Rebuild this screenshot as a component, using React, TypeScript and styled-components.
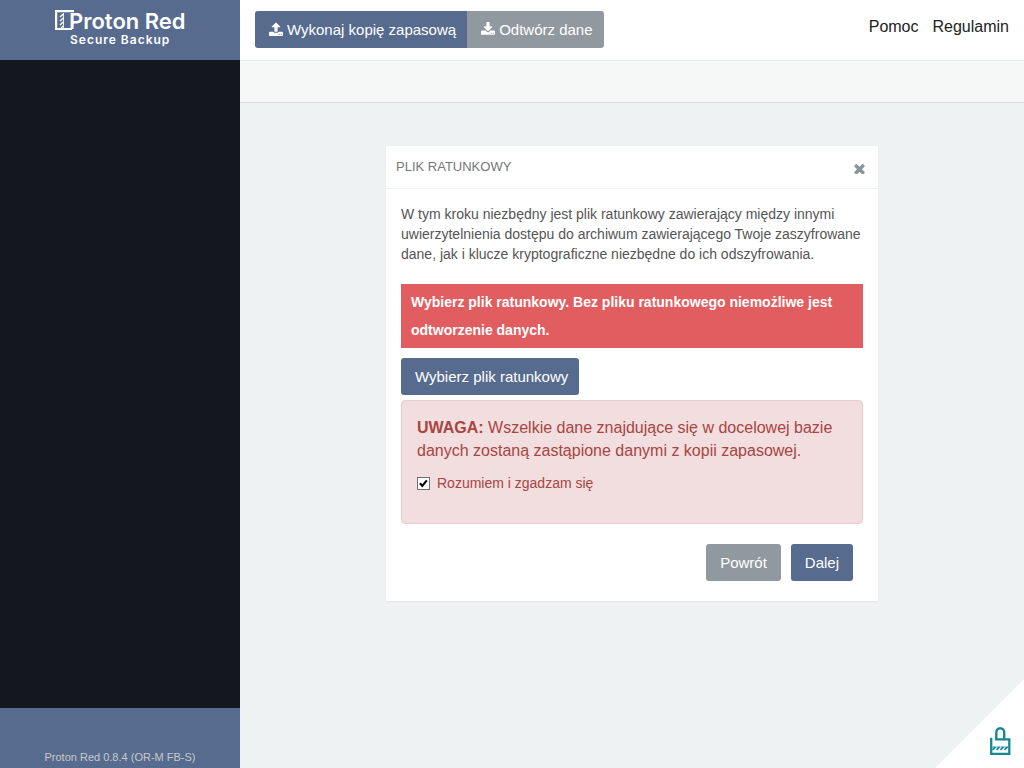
import React from "react";
import styled, { createGlobalStyle } from "styled-components";

const GlobalStyle = createGlobalStyle`
  *, *::before, *::after { box-sizing: border-box; }
  body {
    margin: 0;
    font-family: "Liberation Sans", Arial, sans-serif;
    font-size: 14px;
    line-height: 20px;
    color: #555555;
    background: #eef2f3;
  }
`;

const Layout = styled.div`
  display: grid;
  grid-template-columns: 240px 1fr;
  min-height: 100vh;
`;

const Sidebar = styled.aside`
  display: flex;
  flex-direction: column;
  background: #14171f;
`;

const Brand = styled.a`
  display: flex;
  justify-content: center;
  height: 60px;
  background: #576b8f;
`;

const SideBody = styled.div`
  flex: 1;
`;

const SideFooter = styled.footer`
  display: flex;
  align-items: flex-end;
  justify-content: center;
  height: 60px;
  background: #576b8f;
  color: #c8c8c8;
  font-size: 11px;
  line-height: 22px;
`;

const Main = styled.div`
  display: flex;
  flex-direction: column;
`;

const Header = styled.header`
  display: flex;
  justify-content: space-between;
  align-items: flex-start;
  height: 61px;
  padding: 11px 15px 0;
  background: #ffffff;
  border-bottom: 1px solid #e7e9ea;
`;

const SubBar = styled.div`
  height: 42px;
  background: #f6f8f8;
  border-bottom: 1px solid #d6dee4;
`;

const ButtonGroup = styled.div`
  display: flex;
  border-radius: 3px;
  overflow: hidden;
`;

const Button = styled.button<{ $tone?: "muted"; $square?: boolean; $snug?: boolean }>`
  display: inline-flex;
  align-items: center;
  gap: 4px;
  height: 37px;
  padding: ${(p) => (p.$snug ? "0 11px 0 14px" : "0 14px")};
  border: 0;
  border-radius: ${(p) => (p.$square ? "0" : "3px")};
  background: ${(p) => (p.$tone === "muted" ? "#9199a0" : "#576b8f")};
  color: #ffffff;
  font-family: inherit;
  font-size: 15px;
  line-height: 20px;
  white-space: nowrap;
  cursor: pointer;
`;

const TopNav = styled.nav`
  display: flex;
  gap: 14px;
  padding-top: 6px;
`;

const TopLink = styled.a`
  color: #222222;
  font-size: 16px;
  line-height: 20px;
  text-decoration: none;
`;

const Content = styled.main`
  flex: 1;
  display: flex;
  justify-content: center;
  align-items: flex-start;
  padding: 43px 15px;
`;

const Panel = styled.section`
  width: 100%;
  max-width: 492px;
  background: #ffffff;
  box-shadow: 0 1px 1px rgba(0, 0, 0, 0.05);
`;

const PanelHeader = styled.div`
  display: flex;
  justify-content: space-between;
  align-items: center;
  height: 43px;
  padding: 0 10px;
  border-bottom: 1px solid #eff2f7;
`;

const PanelTitle = styled.h1`
  margin: 0;
  color: #767676;
  font-size: 13px;
  font-weight: 400;
  line-height: 20px;
  text-transform: uppercase;
`;

const CloseButton = styled.button`
  display: flex;
  padding: 3px 3px 0;
  border: 0;
  background: none;
  color: #89949b;
  cursor: pointer;
`;

const PanelBody = styled.div`
  padding: 15px 15px 20px;
`;

const Intro = styled.p`
  margin: 0 0 20px;
`;

const ErrorNote = styled.p`
  margin: 0 0 10px;
  padding: 4px 10px;
  background: #e15d5f;
  color: #ffffff;
  font-weight: 700;
  line-height: 28px;
`;

const Warning = styled.div`
  margin-top: 5px;
  padding: 15px 15px 30px;
  border: 1px solid #ebccd1;
  border-radius: 4px;
  background: #f2dede;
  color: #a94442;
`;

const WarningText = styled.p`
  margin: 0 0 11px;
  font-size: 16px;
  line-height: 23px;
`;

const CheckLabel = styled.label`
  display: flex;
  align-items: center;
  gap: 7px;
  cursor: pointer;
`;

const Checkbox = styled.input`
  appearance: none;
  width: 13px;
  height: 13px;
  margin: 0;
  border: 1px solid #707070;
  background: #ffffff;

  &:checked {
    background: #ffffff
      url("data:image/svg+xml,%3Csvg xmlns='http://www.w3.org/2000/svg' viewBox='0 0 11 11'%3E%3Cpath d='M2 5.2 4.3 7.8 8.8 2.4' fill='none' stroke='%23000' stroke-width='2.1'/%3E%3C/svg%3E")
      center / 11px 11px no-repeat;
  }
`;

const Actions = styled.div`
  display: flex;
  justify-content: flex-end;
  gap: 10px;
  padding: 20px 10px 0 0;
`;

const Corner = styled.a`
  position: fixed;
  right: 0;
  bottom: 0;
  display: flex;
`;

const Logo = () => (
  <svg width="140" height="60" viewBox="0 0 140 60" role="img" aria-label="Proton Red Secure Backup">
    <g fill="none" stroke="#fff">
      <path d="M24 11.100H6.100V29H22" strokeWidth="2.200" />
      <path d="M10 17l3.600-3.200M10 21l3.600-3.200M10 25l3.600-3.200M11 28l2.600-2.200" strokeWidth="1.500" />
      <path d="M13.500 13V28" strokeWidth="0.800" />
    </g>
    <text x="19" y="29" fill="#fff" fontFamily="Inter, sans-serif" fontWeight="600" fontSize="22">Proton Red</text>
    <text x="20" y="44" fill="#fff" fontFamily="Inter, sans-serif" fontWeight="600" fontSize="12" letterSpacing="1">Secure Backup</text>
  </svg>
);

const UploadIcon = () => (
  <svg width="14" height="15" viewBox="0 0 1664 1792" fill="currentColor" aria-hidden="true">
    <path d="M1280 1472q0-26-19-45t-45-19-45 19-19 45 19 45 45 19 45-19 19-45zm256 0q0-26-19-45t-45-19-45 19-19 45 19 45 45 19 45-19 19-45zm128-224v320q0 40-28 68t-68 28h-1472q-40 0-68-28t-28-68v-320q0-40 28-68t68-28h427q21 56 70.5 92t110.5 36h256q61 0 110.5-36t70.5-92h427q40 0 68 28t28 68zm-325-648q-17 40-59 40h-256v448q0 26-19 45t-45 19h-256q-26 0-45-19t-19-45v-448h-256q-42 0-59-40-17-39 14-69l448-448q18-19 45-19t45 19l448 448q31 30 14 69z" />
  </svg>
);

const DownloadIcon = () => (
  <svg width="14" height="15" viewBox="0 0 1664 1792" fill="currentColor" aria-hidden="true">
    <path d="M1280 1344q0-26-19-45t-45-19-45 19-19 45 19 45 45 19 45-19 19-45zm256 0q0-26-19-45t-45-19-45 19-19 45 19 45 45 19 45-19 19-45zm128-224v320q0 40-28 68t-68 28h-1472q-40 0-68-28t-28-68v-320q0-40 28-68t68-28h465l135 136q58 56 136 56t136-56l136-136h464q40 0 68 28t28 68zm-325-569q17 41-14 70l-448 448q-18 19-45 19t-45-19l-448-448q-31-29-14-70 17-39 59-39h256v-448q0-26 19-45t45-19h256q26 0 45 19t19 45v448h256q42 0 59 39z" />
  </svg>
);

const CloseIcon = () => (
  <svg width="11" height="11" viewBox="270 250 1252 1252" fill="currentColor" aria-hidden="true">
    <path d="M1490 1322q0 40-28 68l-136 136q-28 28-68 28t-68-28l-294-294-294 294q-28 28-68 28t-68-28l-136-136q-28-28-28-68t28-68l294-294-294-294q-28-28-28-68t28-68l136-136q28-28 68-28t68 28l294 294 294-294q28-28 68-28t68 28l136 136q28 28 28 68t-28 68l-294 294 294 294q28 28 28 68z" />
  </svg>
);

const CornerLock = () => (
  <svg width="90" height="90" viewBox="0 0 90 90" aria-hidden="true">
    <path d="M90 1V90H1z" fill="#fff" />
    <g fill="none" stroke="#138a93">
      <path d="M57.200 59.700V75.800H75.300V61.300H61.200" strokeWidth="2.300" />
      <path d="M62.300 61.500V54.300a3.900 4 0 0 1 7.900 0V61.500" strokeWidth="2.400" />
      <path d="M58.500 71.800l3-3M62.500 71.800l3-3M66.500 71.800l3-3M70.500 71.800l3-3" strokeWidth="1.700" />
      <path d="M58 69h16" strokeWidth="0.700" />
    </g>
  </svg>
);

export default function App() {
  return (
    <>
      <GlobalStyle />
      <Layout>
        <Sidebar>
          <Brand href="#">
            <Logo />
          </Brand>
          <SideBody />
          <SideFooter>Proton Red 0.8.4 (OR-M FB-S)</SideFooter>
        </Sidebar>
        <Main>
          <Header>
            <ButtonGroup>
              <Button type="button" $square $snug>
                <UploadIcon />
                Wykonaj kopię zapasową
              </Button>
              <Button type="button" $square $snug $tone="muted">
                <DownloadIcon />
                Odtwórz dane
              </Button>
            </ButtonGroup>
            <TopNav>
              <TopLink href="#">Pomoc</TopLink>
              <TopLink href="#">Regulamin</TopLink>
            </TopNav>
          </Header>
          <SubBar />
          <Content>
            <Panel>
              <PanelHeader>
                <PanelTitle>Plik ratunkowy</PanelTitle>
                <CloseButton type="button" aria-label="Zamknij">
                  <CloseIcon />
                </CloseButton>
              </PanelHeader>
              <PanelBody>
                <Intro>
                  W tym kroku niezbędny jest plik ratunkowy zawierający między innymi uwierzytelnienia
                  dostępu do archiwum zawierającego Twoje zaszyfrowane dane, jak i klucze
                  kryptograficzne niezbędne do ich odszyfrowania.
                </Intro>
                <ErrorNote>
                  Wybierz plik ratunkowy. Bez pliku ratunkowego niemożliwe jest odtworzenie danych.
                </ErrorNote>
                <Button type="button" $snug>Wybierz plik ratunkowy</Button>
                <Warning>
                  <WarningText>
                    <strong>UWAGA:</strong> Wszelkie dane znajdujące się w docelowej bazie danych
                    zostaną zastąpione danymi z kopii zapasowej.
                  </WarningText>
                  <CheckLabel>
                    <Checkbox type="checkbox" defaultChecked />
                    Rozumiem i zgadzam się
                  </CheckLabel>
                </Warning>
                <Actions>
                  <Button type="button" $tone="muted">Powrót</Button>
                  <Button type="button">Dalej</Button>
                </Actions>
              </PanelBody>
            </Panel>
          </Content>
        </Main>
      </Layout>
      <Corner href="#" aria-label="Bezpieczeństwo">
        <CornerLock />
      </Corner>
    </>
  );
}
